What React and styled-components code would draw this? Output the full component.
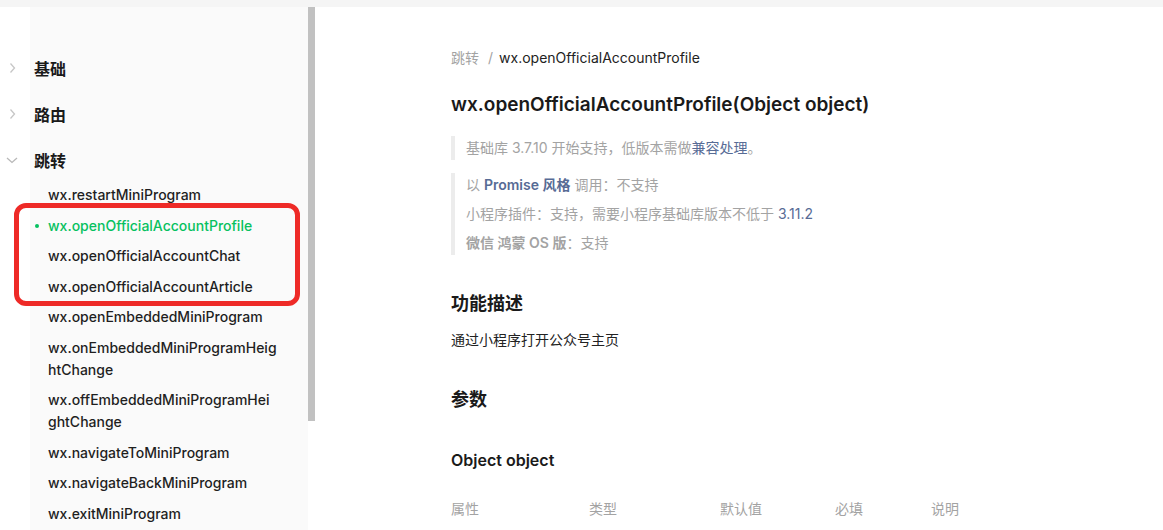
import React from "react";
import styled, { createGlobalStyle } from "styled-components";

const Global = createGlobalStyle`
  html, body { margin: 0; padding: 0; background: #fff; }
  body {
    font-family: Inter, "Noto Sans CJK SC", sans-serif;
    color: #1a1a1a;
    -webkit-font-smoothing: antialiased;
  }
  * { box-sizing: border-box; }
`;

const Page = styled.div`
  width: 1163px;
  height: 530px;
  overflow: hidden;
  display: flex;
  flex-direction: column;
`;

const TopBar = styled.div`
  height: 7px;
  flex: none;
  background: #f5f5f5;
`;

const Body = styled.div`
  flex: 1;
  display: flex;
  min-height: 0;
`;

const Sidebar = styled.nav`
  position: relative;
  width: 308px;
  flex: none;
  padding-top: 41px;
  background: linear-gradient(to right, #fff 30px, #fafafa 30px);
`;

const ScrollTrack = styled.div`
  width: 7px;
  flex: none;
  display: flex;
  flex-direction: column;
`;

const ScrollThumb = styled.div`
  height: 414px;
  background: #c1c1c1;
`;

const Group = styled.div`
  margin-bottom: 6px;
`;

const GroupTitle = styled.div`
  height: 40px;
  display: flex;
  align-items: center;
  gap: 14px;
  padding-left: 4px;
  font-size: 16px;
  font-weight: 600;
  color: #1a1a1a;
`;

const Chevron = styled.svg`
  width: 16px;
  height: 16px;
  flex: none;
`;

const SubList = styled.ul`
  list-style: none;
  margin: 0;
  padding: 0;
`;

const SubItem = styled.li`
  position: relative;
  padding: 4.25px 31px 4.25px 48px;
  line-height: 22px;
  font-size: 14px;
  font-weight: 500;
  word-break: break-all;
  color: ${(p) => (p.$active ? "#07c160" : "#1f1f1f")};
  ${(p) =>
    p.$active &&
    `&::before {
      content: "";
      position: absolute;
      left: 35px;
      top: 50%;
      width: 4px;
      height: 4px;
      margin-top: -2px;
      border-radius: 50%;
      background: #07c160;
    }`}
`;

const Highlight = styled.div`
  position: absolute;
  left: 14px;
  top: 196px;
  width: 286px;
  height: 103px;
  border: 5px solid #ee2a27;
  border-radius: 12px;
  pointer-events: none;
`;

const Main = styled.main`
  flex: 1;
  padding: 40px 0 0 136px;
`;

const Crumbs = styled.div`
  display: flex;
  align-items: center;
  line-height: 22px;
  font-size: 14px;
  color: #222;
`;

const CrumbLink = styled.span`
  color: #a3a3a3;
`;

const CrumbSep = styled.span`
  color: #a3a3a3;
  margin: 0 6px 0 9px;
`;

const Title = styled.h1`
  margin: 22px 0 17px;
  font-size: 19px;
  line-height: 28px;
  font-weight: 600;
  color: #1a1a1a;
`;

const Quote = styled.blockquote`
  margin: 0 0 ${(p) => p.$mb || 0}px;
  padding: 1px 0 1px 11px;
  border-left: 4px solid #ececec;
  display: flex;
  flex-direction: column;
  gap: 7px;
`;

const QuoteLine = styled.p`
  margin: 0;
  font-size: 14px;
  line-height: 22px;
  color: #a3a3a3;
`;

const Link = styled.a`
  color: #576b95;
  text-decoration: none;
  font-weight: ${(p) => (p.$bold ? 600 : 400)};
`;

const Strong = styled.strong`
  font-weight: 600;
`;

const H2 = styled.h2`
  margin: ${(p) => p.$mt}px 0 0;
  font-size: 18px;
  line-height: 26px;
  font-weight: 600;
  color: #1a1a1a;
`;

const Para = styled.p`
  margin: 12px 0 0;
  font-size: 14px;
  line-height: 22px;
  color: #222;
`;

const H3 = styled.h3`
  margin: 35px 0 0;
  font-size: 16px;
  line-height: 24px;
  font-weight: 600;
  color: #1a1a1a;
`;

const TableHead = styled.div`
  margin-top: 26px;
  display: grid;
  grid-template-columns: 138px 131px 115px 96px 120px;
  font-size: 14px;
  line-height: 22px;
  color: #a3a3a3;
`;

const ChevronRight = () => (
  <Chevron viewBox="0 0 16 16">
    <polyline points="6.5,3.5 10.5,8 6.5,12.5" fill="none" stroke="#c6c6c6" strokeWidth="1.3" />
  </Chevron>
);

const ChevronDown = () => (
  <Chevron viewBox="0 0 16 16">
    <polyline points="3,6 8,10.5 13,6" fill="none" stroke="#b8b8b8" strokeWidth="1.3" />
  </Chevron>
);

const items = [
  "wx.restartMiniProgram",
  "wx.openOfficialAccountProfile",
  "wx.openOfficialAccountChat",
  "wx.openOfficialAccountArticle",
  "wx.openEmbeddedMiniProgram",
  "wx.onEmbeddedMiniProgramHeightChange",
  "wx.offEmbeddedMiniProgramHeightChange",
  "wx.navigateToMiniProgram",
  "wx.navigateBackMiniProgram",
  "wx.exitMiniProgram",
];

export default function App() {
  return (
    <Page>
      <Global />
      <TopBar />
      <Body>
        <Sidebar>
          <Group>
            <GroupTitle>
              <ChevronRight />
              基础
            </GroupTitle>
          </Group>
          <Group>
            <GroupTitle>
              <ChevronRight />
              路由
            </GroupTitle>
          </Group>
          <Group>
            <GroupTitle>
              <ChevronDown />
              跳转
            </GroupTitle>
            <SubList>
              {items.map((it) => (
                <SubItem key={it} $active={it === "wx.openOfficialAccountProfile"}>
                  {it}
                </SubItem>
              ))}
            </SubList>
          </Group>
          <Highlight />
        </Sidebar>
        <ScrollTrack>
          <ScrollThumb />
        </ScrollTrack>
        <Main>
          <Crumbs>
            <CrumbLink>跳转</CrumbLink>
            <CrumbSep>/</CrumbSep>
            wx.openOfficialAccountProfile
          </Crumbs>
          <Title>wx.openOfficialAccountProfile(Object object)</Title>
          <Quote $mb={13}>
            <QuoteLine>
              基础库 3.7.10 开始支持，低版本需做<Link>兼容处理</Link>。
            </QuoteLine>
          </Quote>
          <Quote>
            <QuoteLine>
              以 <Link $bold>Promise 风格</Link> 调用：不支持
            </QuoteLine>
            <QuoteLine>
              小程序插件：支持，需要小程序基础库版本不低于 <Link>3.11.2</Link>
            </QuoteLine>
            <QuoteLine>
              <Strong>微信 鸿蒙 OS 版</Strong>：支持
            </QuoteLine>
          </Quote>
          <H2 $mt={36}>功能描述</H2>
          <Para>通过小程序打开公众号主页</Para>
          <H2 $mt={36}>参数</H2>
          <H3>Object object</H3>
          <TableHead>
            <span>属性</span>
            <span>类型</span>
            <span>默认值</span>
            <span>必填</span>
            <span>说明</span>
          </TableHead>
        </Main>
      </Body>
    </Page>
  );
}
